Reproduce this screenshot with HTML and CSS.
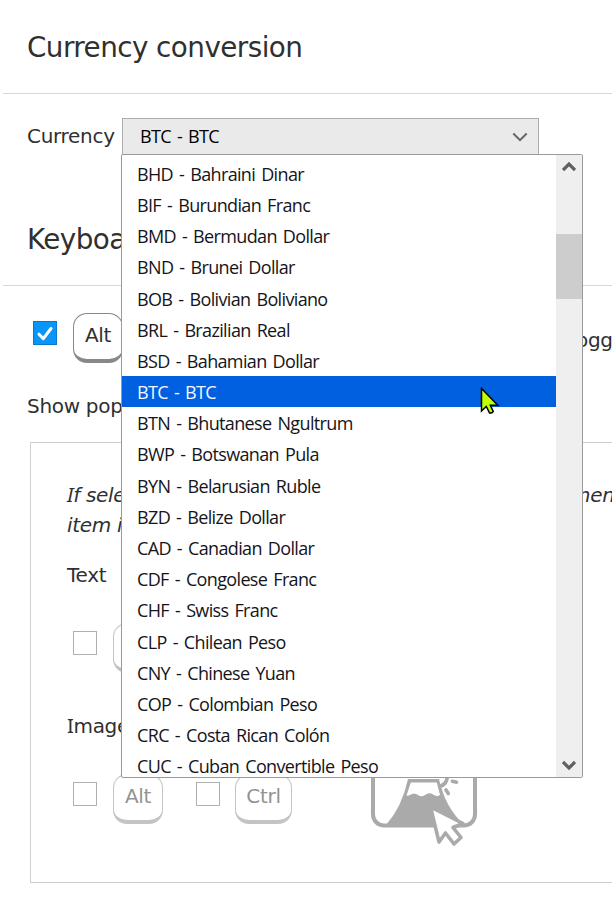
FILE: index.html
```html
<!DOCTYPE html>
<html lang="en">
<head>
<meta charset="utf-8">
<title>Options</title>
<link rel="stylesheet" href="styles.css">
</head>
<body>
<main class="page">
  <h2 class="heading">Currency conversion</h2>
  <section class="currency">
    <span class="label">Currency</span>
    <div class="select">
      <div class="select-box"><span>BTC - BTC</span>
        <svg class="chevron" width="16" height="10" viewBox="0 0 16 10"><path d="M1.3 1.5 8 8.2 14.7 1.5" fill="none" stroke="#666" stroke-width="2"/></svg>
      </div>
      <div class="menu">
        <ul class="options">
          <li>BHD - Bahraini Dinar</li>
          <li>BIF - Burundian Franc</li>
          <li>BMD - Bermudan Dollar</li>
          <li>BND - Brunei Dollar</li>
          <li>BOB - Bolivian Boliviano</li>
          <li>BRL - Brazilian Real</li>
          <li>BSD - Bahamian Dollar</li>
          <li class="active">BTC - BTC</li>
          <li>BTN - Bhutanese Ngultrum</li>
          <li>BWP - Botswanan Pula</li>
          <li>BYN - Belarusian Ruble</li>
          <li>BZD - Belize Dollar</li>
          <li>CAD - Canadian Dollar</li>
          <li>CDF - Congolese Franc</li>
          <li>CHF - Swiss Franc</li>
          <li>CLP - Chilean Peso</li>
          <li>CNY - Chinese Yuan</li>
          <li>COP - Colombian Peso</li>
          <li>CRC - Costa Rican Colón</li>
          <li>CUC - Cuban Convertible Peso</li>
        </ul>
        <div class="scrollbar">
          <svg width="14" height="11" viewBox="0 0 14 11"><path d="M1 9 7 3 13 9" fill="none" stroke="#606060" stroke-width="3.2"/></svg>
          <div class="thumb"></div>
          <svg class="down" width="14" height="11" viewBox="0 0 14 11"><path d="M1 2 7 8 13 2" fill="none" stroke="#606060" stroke-width="3.2"/></svg>
        </div>
        <svg class="pointer" width="20" height="28" viewBox="0 0 20 28"><path d="M1.5 1.5V24L6.3 19.5 9.6 26 Q12 26.5 13.2 24.3L10.3 18.3H17.8Z" fill="#bfff00" stroke="#000" stroke-width="1.5"/></svg>
      </div>
    </div>
  </section>
  <h2 class="heading">Keyboa</h2>
  <section class="shortcut">
    <span class="check checked"><svg width="22" height="22" viewBox="0 0 22 22"><path d="M5 12.2 9.3 16.7 17 6.5" fill="none" stroke="#fff" stroke-width="3" stroke-linecap="round" stroke-linejoin="round"/></svg></span>
    <kbd class="key">Alt</kbd>
    <span class="toggle">ogg</span>
  </section>
  <p class="popup">Show pop</p>
  <section class="panel">
    <div class="note">
      <p class="line"><span class="start"><span class="serif-i">I</span>f sele</span><span>men</span></p>
      <p class="line">item i</p>
    </div>
    <p class="type">Text</p>
    <div class="keys"><span class="check"></span><kbd class="key muted"></kbd></div>
    <p class="type image"><span class="serif-i">I</span>mage</p>
    <div class="keys">
      <span class="check"></span><kbd class="key muted">Alt</kbd>
      <span class="check second"></span><kbd class="key muted ctrl">Ctrl</kbd>
      <svg class="picture" width="106" height="106" viewBox="0 0 106 106">
        <g fill="none" stroke="#aaa" stroke-width="4" stroke-linecap="round" stroke-linejoin="round">
          <rect x="2" y="6.5" width="102" height="77" rx="11"/>
          <path d="M70 44Q78 41 76 28M81.5 39.3 85.5 40.2M75 48 77.3 51.5" stroke-width="3.6"/>
        </g>
        <path d="M15 83Q31 65 37 37H68Q74 65 93 83Z" fill="#aaa"/>
        <path d="M39.8 40.5H65.8L69 53Q65.5 55 62 52.5Q58 50 54 53Q50 55.5 47 53Q43 50 39 53Q37 54 35.5 53.5Z" fill="#fff"/>
        <path d="M59.5 65 92 81.5 82 85.5 90 95.5 83 102 74.5 91 68 100Z" fill="#fff" stroke="#aaa" stroke-width="3.6" stroke-linejoin="round"/>
      </svg>
    </div>
  </section>
</main>
</body>
</html>
```
FILE: styles.css
```css
* { box-sizing: border-box; }
body { margin: 0; background: #fff; color: #303030; font: 20px/30px "DejaVu Sans", sans-serif; letter-spacing: -0.3px; }
.page { width: 612px; height: 906px; overflow: hidden; padding-left: 3px; }
p, h2, ul { margin: 0; }
.heading { height: 94px; padding: 28px 24px 0; border-bottom: 1px solid #d7d7d7; font-size: 27.8px; letter-spacing: -0.55px; line-height: 40px; font-weight: 400; }
.currency { display: flex; height: 98px; padding: 24px 0 0 24px; }
.label { width: 95px; padding-top: 3px; white-space: nowrap; }
.select { position: relative; width: 417px; height: 37px; font: 18px/31px "Open Sans", sans-serif; letter-spacing: -0.65px; word-spacing: 2px; }
.select-box { display: flex; align-items: center; justify-content: space-between; height: 37px; padding: 0 10px 0 17px; border: 1px solid #adadad; background: #eaeaea; color: #000; }
.menu { position: absolute; z-index: 2; top: 36px; left: -1px; display: flex; width: 462px; height: 624px; border: 1px solid #9a9a9a; border-radius: 2px; background: #fff; color: #15141a; overflow: hidden; }
.options { flex: 1; padding: 2.8px 0 0; list-style: none; }
.options li { height: 31.2px; padding-left: 15px; line-height: 32.2px; white-space: nowrap; }
.options .active { background: #0060df; color: #f2f6ff; }
.scrollbar { display: flex; flex-direction: column; align-items: center; width: 26px; padding: 6px 0; background: #efefef; }
.thumb { width: 26px; height: 65px; margin-top: 62px; background: #cdcdcd; }
.down { margin-top: auto; }
.pointer { position: absolute; left: 358px; top: 232px; }
.shortcut { display: flex; height: 103px; padding: 27px 0 0 30px; }
.check { flex: none; width: 24px; height: 24px; margin-top: 8px; border: 1px solid #b0b0b0; }
.checked { border-color: #0878cc; background: #0996f8; }
.checked svg { display: block; }
.key { flex: none; width: 50px; height: 50px; margin-left: 16px; border: 1px solid #888; border-bottom-width: 4px; border-radius: 14px; font: inherit; line-height: 43px; text-align: center; }
.muted { border-color: #c4c4c4; color: #939393; }
.toggle { margin-left: 453px; padding-top: 12px; }
.popup { height: 53px; padding: 2px 0 0 24px; }
.panel { width: 640px; height: 441px; margin-left: 27px; padding: 37px 0 0 36px; border: 1px solid #cfcfcf; }
.note { height: 80px; font-style: italic; }
.line { display: flex; }
.start { width: 504px; }
.type { height: 63px; }
.keys { display: flex; height: 88px; padding-left: 6px; }
.serif-i { font-family: "Noto Sans", sans-serif; line-height: 1; }
.second { margin-left: 33px; }
.ctrl { width: 57px; margin-left: 15px; }
.picture { margin: -32px 0 0 79px; }
```
